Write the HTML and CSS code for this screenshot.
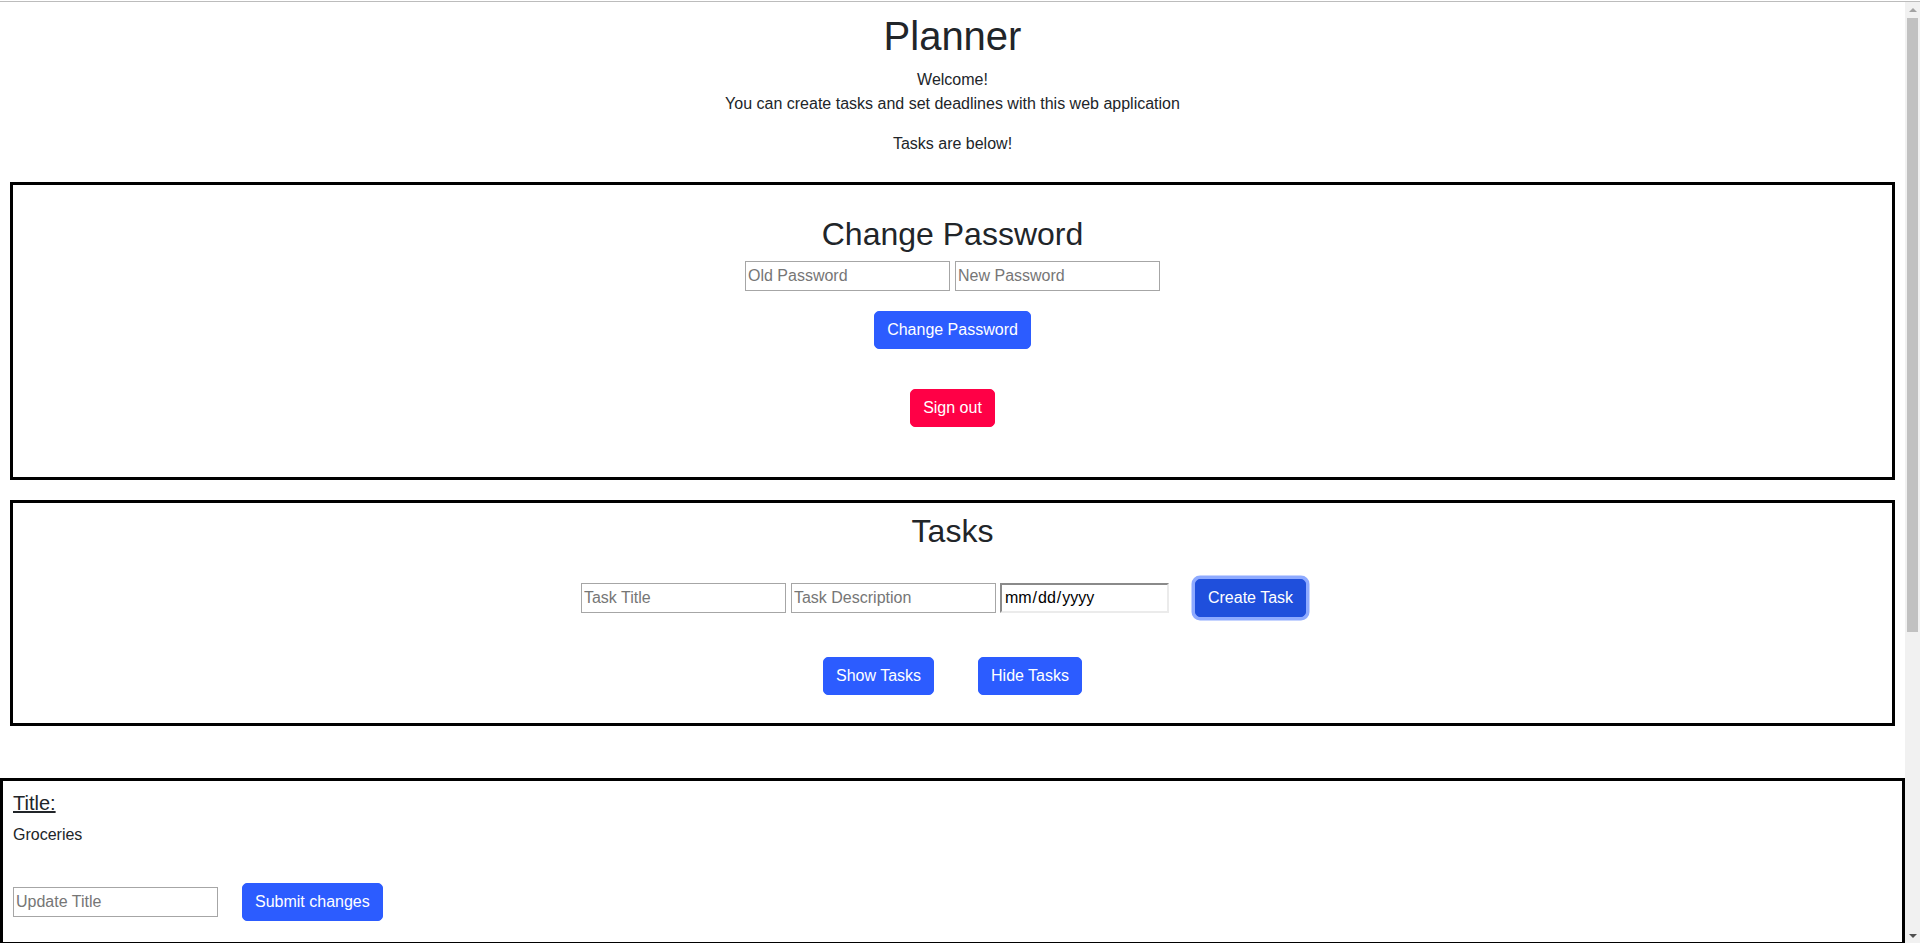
FILE: index.html
```html
<!DOCTYPE html>
<html lang="en">
<head>
<meta charset="utf-8">
<title>Planner</title>
<link rel="stylesheet" href="styles.css">
</head>
<body>
<div class="topline"></div>
<div class="viewport">
  <main class="page">
    <header class="intro">
      <h1 class="page-title">Planner</h1>
      <p class="intro-text">Welcome!<br>You can create tasks and set deadlines with this web application</p>
      <p class="intro-note">Tasks are below!</p>
    </header>

    <section class="panel panel-password">
      <h2 class="panel-title">Change Password</h2>
      <div class="password-row">
        <input class="field" type="password" placeholder="Old Password">
        <input class="field" type="password" placeholder="New Password">
      </div>
      <button class="btn btn-primary btn-change">Change Password</button>
      <button class="btn btn-danger btn-signout">Sign out</button>
    </section>

    <section class="panel panel-tasks">
      <h2 class="panel-title panel-title-tasks">Tasks</h2>
      <div class="task-form">
        <input class="field" type="text" placeholder="Task Title">
        <input class="field" type="text" placeholder="Task Description">
        <input class="field field-date" type="date">
        <button class="btn btn-primary btn-create">Create Task</button>
      </div>
      <div class="task-toggle">
        <button class="btn btn-primary">Show Tasks</button>
        <button class="btn btn-primary">Hide Tasks</button>
      </div>
    </section>

    <section class="task-card">
      <div class="task-field">
        <h5 class="field-label">Title:</h5>
        <p class="field-value">Groceries</p>
        <div class="update-row">
          <input class="field" type="text" placeholder="Update Title">
          <button class="btn btn-primary">Submit changes</button>
        </div>
      </div>
      <div class="task-field">
        <h5 class="field-label">Description:</h5>
        <p class="field-value">Milk, eggs and bread</p>
        <div class="update-row">
          <input class="field" type="text" placeholder="Update Description">
          <button class="btn btn-primary">Submit changes</button>
        </div>
      </div>
      <div class="task-field">
        <h5 class="field-label">Deadline:</h5>
        <p class="field-value">2023-05-20</p>
        <div class="update-row">
          <input class="field field-date" type="date">
          <button class="btn btn-primary">Submit changes</button>
        </div>
      </div>
      <div class="task-actions">
        <button class="btn btn-danger">Delete Task</button>
      </div>
    </section>
  </main>

  <div class="scrollbar" aria-hidden="true">
    <div class="sb-button"><span class="sb-arrow-up"></span></div>
    <div class="sb-track"><div class="sb-thumb"></div></div>
    <div class="sb-button"><span class="sb-arrow-down"></span></div>
  </div>
</div>
</body>
</html>
```

FILE: styles.css
```css
html {
  margin: 0;
  padding: 0;
}

body {
  margin: 0;
  font-family: "Liberation Sans", Arial, sans-serif;
  font-size: 16px;
  line-height: 1.5;
  color: #212529;
  background: #fff;
}

.topline {
  height: 1px;
  border-top: 1px solid #fff;
  background: #bcbcbc;
}

.viewport {
  display: flex;
  align-items: flex-start;
}

.page {
  flex: 1 1 auto;
  min-width: 0;
}

/* fake classic scrollbar */
.scrollbar {
  flex: 0 0 15px;
  width: 15px;
  height: 941px;
  background: #f1f1f1;
  display: flex;
  flex-direction: column;
}

.sb-button {
  height: 15px;
  flex: 0 0 15px;
  display: flex;
  align-items: center;
  justify-content: center;
}

.sb-arrow-up {
  width: 0;
  height: 0;
  border-left: 4px solid transparent;
  border-right: 4px solid transparent;
  border-bottom: 4px solid #a3a3a3;
}

.sb-arrow-down {
  width: 0;
  height: 0;
  border-left: 4px solid transparent;
  border-right: 4px solid transparent;
  border-top: 4px solid #505050;
}

.sb-track {
  flex: 1 1 auto;
  padding: 1px 2px 0;
}

.sb-thumb {
  height: 614px;
  background: #c1c1c1;
}

.intro {
  text-align: center;
}

.page-title {
  margin: 9.5px 0 8px;
  font-size: 40px;
  line-height: 48px;
  font-weight: 400;
}

.intro-text {
  margin: 0 0 16px;
}

.intro-note {
  margin: 0;
}

.panel {
  border: 3px solid #000;
  margin: 0 10px;
  display: flex;
  flex-direction: column;
  align-items: center;
}

.panel-password {
  margin-top: 26.5px;
  padding: 29.5px 0 49.6px;
}

.panel-tasks {
  margin-top: 20px;
  padding: 9.4px 0 28.2px;
}

.panel-title {
  margin: 0 0 8.5px;
  font-size: 32px;
  line-height: 38.4px;
  font-weight: 400;
}

.panel-title-tasks {
  margin-bottom: 28px;
}

.password-row {
  display: flex;
  gap: 5px;
  margin-bottom: 20px;
}

.field {
  box-sizing: border-box;
  width: 205px;
  height: 30px;
  margin: 0;
  padding: 1px 2px;
  border: 1px solid #a6a6a6;
  border-radius: 0;
  font-family: "Liberation Sans", Arial, sans-serif;
  font-size: 16px;
  line-height: 24px;
  color: #000;
  background: #fff;
  outline: none;
}

.field::placeholder {
  color: #767676;
}

.field-date {
  width: 169px;
  border-width: 2px;
  border-style: solid;
  border-color: #8a8a8a #ebebeb #ebebeb #8a8a8a;
  padding: 1px 2px;
}

.field-date::-webkit-calendar-picker-indicator {
  display: none;
}

.field-date::-webkit-datetime-edit {
  padding: 0;
}

.btn {
  box-sizing: border-box;
  height: 38px;
  padding: 6px 12px;
  border: 1px solid transparent;
  border-radius: 5px;
  font-family: "Liberation Sans", Arial, sans-serif;
  font-size: 16px;
  line-height: 24px;
  color: #fff;
  cursor: pointer;
  white-space: nowrap;
}

.btn-primary {
  background: #2c5cff;
  border-color: #2c5cff;
}

.btn-danger {
  background: #ff0046;
  border-color: #ff0046;
}

.btn-change {
  margin-bottom: 40px;
}

.task-form {
  display: flex;
  align-items: center;
  gap: 5px;
  margin-bottom: 40px;
}

.task-form .field-date {
  margin-left: -1px;
}

.btn-create {
  margin-left: 21px;
  margin-right: 18px;
  background: #1f4fdc;
  border-color: #1f4fdc;
  box-shadow: 0 0 0 3.5px #8eaaff;
}

.task-toggle {
  display: flex;
  gap: 44px;
}

.task-card {
  margin-top: 52px;
  border: 3px solid #000;
}

.task-field {
  padding: 10px 10px 21px;
  border-bottom: 3px solid #000;
}

.field-label {
  margin: 0 0 8px;
  font-size: 20px;
  line-height: 24px;
  font-weight: 400;
  text-decoration: underline;
}

.field-value {
  margin: 0 0 36px;
}

.update-row {
  display: flex;
  align-items: center;
  gap: 24px;
}

.task-actions {
  padding: 20px 10px;
}
```
